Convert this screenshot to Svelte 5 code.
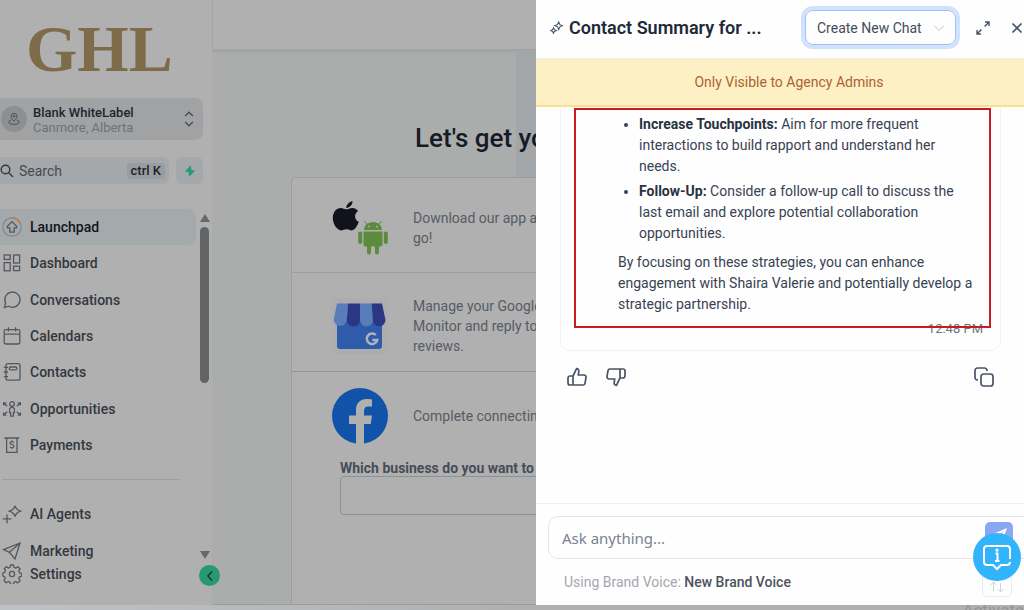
<script>
  const primary = [
    { label: 'Launchpad', icon: 'launch', active: true },
    { label: 'Dashboard', icon: 'dashboard' },
    { label: 'Conversations', icon: 'chat' },
    { label: 'Calendars', icon: 'calendar' },
    { label: 'Contacts', icon: 'contacts' },
    { label: 'Opportunities', icon: 'opps' },
    { label: 'Payments', icon: 'payments' }
  ];
  const secondary = [
    { label: 'AI Agents', icon: 'ai' },
    { label: 'Marketing', icon: 'send' }
  ];
</script>

{#snippet navIcon(name)}
  <svg class="nav-icon" viewBox="0 0 20 20" aria-hidden="true">
    {#if name === 'launch'}
      <circle cx="10" cy="10" r="9.2" stroke="#85888b" />
      <path d="M10 .8a9.2 9.2 0 0 1 8.3 6" stroke="#c07c4e" stroke-width="1.6" />
      <path d="M10 4.6 5.4 9.3v1.5h2.4v4.400h4.400v-4.400h2.400V9.300z" />
    {:else if name === 'dashboard'}
      <rect x="2.200" y="2" width="6" height="4.400" /><rect x="2.200" y="9.600" width="6" height="8.200" />
      <rect x="11.600" y="2" width="6" height="8" /><rect x="11.600" y="13.200" width="6" height="4.400" />
    {:else if name === 'chat'}
      <path d="M2.400 17.600 3.600 13a7.600 7.600 0 1 1 3 3.200z" />
    {:else if name === 'calendar'}
      <rect x="2.200" y="3.600" width="15.600" height="14.400" rx="1.400" /><path d="M2.200 8.200h15.600M6.400 1.200v4.400M13.600 1.200v4.400" />
    {:else if name === 'contacts'}
      <rect x="4" y="1.600" width="14" height="16.600" rx="2" /><rect x="7.400" y="5" width="7.400" height="2.800" rx="1" />
      <path d="M1.800 5.400H6M1.800 10H6M1.800 14.600H6" />
    {:else if name === 'opps'}
      <circle cx="10" cy="5" r="2.300" /><path d="M7.600 9.600q2.400-2.400 4.800 0v4h-1v3.600H8.600v-3.600h-1z" />
      <path d="M1.600 6.600V3.800h2.800M1.800 4l3.400 3.200M18.400 6.600V3.800h-2.800M18.200 4l-3.400 3.200M1.600 13.400v2.800h2.800M1.800 16l3.400-3.200M18.400 13.400v2.800h-2.800M18.200 16l-3.400-3.200" />
    {:else if name === 'payments'}
      <path d="M2.400 3h14.800M4.600 3v14.400H15V3M11.800 7.600q-.6-1-2-1-1.700 0-1.700 1.500 0 1.200 1.800 1.500 2 .3 2 1.700 0 1.500-2 1.500-1.500 0-2-1M9.900 5.400v1.200M9.900 12.800V14" />
    {:else if name === 'ai'}
      <path d="M13 1.800q1 4 5.600 5.400-4.600 1.400-5.600 5.400-1-4-5.600-5.400Q12 5.800 13 1.800zM5 10.400v8.800M.6 14.800h8.800" />
    {:else if name === 'send'}
      <path d="M18 2 1.600 8.600l5.800 2.700L13 18zM18 2 7.400 11.300" />
    {:else if name === 'gear'}
      <circle cx="10" cy="10" r="2.600" />
      <path d="M8.500 1h3l.6 2.400 1.700.7 2.100-1.300 2.200 2.200-1.300 2.100.7 1.700 2.100.5v3l-2.200.5-.7 1.700 1.300 2.200-2.200 2.200-2.100-1.300-1.700.7-.5 2.100h-3l-.6-2.200-1.700-.7-2.100 1.300L2 16.600l1.300-2.100-.7-1.700L.8 12V9l2-.7.700-1.700L2.200 4.700l2.200-2.100 2 1.400 1.600-.7z" stroke-linejoin="round" />
    {/if}
  </svg>
{/snippet}

<div class="page">
  <div class="shell">
    <aside class="sidebar">
      <div class="logo">GHL</div>
      <button class="location">
        <span class="pin">
          <svg viewBox="0 0 16 16" aria-hidden="true"><path d="M8 10.500C5.800 8.300 4.600 6.700 4.600 5a3.400 3.400 0 0 1 6.800 0c0 1.700-1.200 3.300-3.400 5.500zM4.700 9.200C2.700 9.700 2 10.500 2 11.500c0 1.600 2.700 2.600 6 2.600s6-1 6-2.600c0-1-.7-1.800-2.700-2.300" /><circle cx="8" cy="5" r="1" /></svg>
        </span>
        <span class="place"><strong>Blank WhiteLabel</strong><span>Canmore, Alberta</span></span>
        <svg class="updown" viewBox="0 0 10 16" aria-hidden="true"><path d="M1.200 5 5 1.200 8.800 5M1.200 11 5 14.800 8.800 11" /></svg>
      </button>
      <div class="search-row">
        <label class="search">
          <svg viewBox="0 0 14 14" aria-hidden="true"><circle cx="5.500" cy="5.500" r="4.300" /><path d="m8.800 8.800 4.200 4.200" /></svg>
          <input type="search" placeholder="Search" aria-label="Search" />
          <kbd>ctrl K</kbd>
        </label>
        <button class="bolt" aria-label="Quick actions">
          <svg viewBox="0 0 12 12" aria-hidden="true"><path d="M6.600.3.800 6.800h3.700L5.300 11.700l5.900-6.500H7.600z" /></svg>
        </button>
      </div>
      <div class="nav-area">
        <nav>
          {#each primary as item}
            <a href="#nav" class:active={item.active}>{@render navIcon(item.icon)}{item.label}</a>
          {/each}
          <hr />
          {#each secondary as item}
            <a href="#nav">{@render navIcon(item.icon)}{item.label}</a>
          {/each}
        </nav>
        <div class="scrollbar" aria-hidden="true"><i class="up"></i><i class="thumb"></i><i class="down"></i></div>
      </div>
      <a class="settings" href="#nav">{@render navIcon('gear')}Settings</a>
      <button class="collapse" aria-label="Collapse sidebar"><svg viewBox="0 0 10 12" aria-hidden="true"><path d="M7 1.500 3 6l4 4.500" /></svg></button>
    </aside>

    <main>
      <div class="topbar"></div>
      <div class="hero"><h1>Let's get you</h1></div>
      <section class="steps">
        <div class="step first">
          <svg class="art" viewBox="0 0 56 56" aria-hidden="true">
            <g fill="#10131c"><path d="M20.500 1.200c.3 3-2.700 6.600-6.200 6.700C13.900 5 17.200 1.600 20.500 1.200z" /><path d="M14.200 9.300c2-.1 3.700-1.600 6.400-1.400 2.400.2 4.300 1.300 5.400 3-4.300 2.900-3.600 8.800.8 10.900-1 3.300-3.900 8.400-7 8.600-1.800 0-2.900-1.100-5.300-1.100s-3.600 1.100-5.300 1.100C4.700 30.200.6 23.800.8 17.600 1 11.800 4.600 8 8.600 8c2.300 0 3.900 1.300 5.600 1.300z" /></g>
            <g fill="#5d8a3c"><path d="M32 30c0-4.400 3.600-8 9-8s9 3.600 9 8zM31.500 31.500h19v13a2 2 0 0 1-2 2H47v6a2 2 0 0 1-4 0v-6h-4v6a2 2 0 0 1-4 0v-6h-1.500a2 2 0 0 1-2-2z" /><rect x="26.200" y="31.500" width="4" height="12.500" rx="2" /><rect x="51.800" y="31.500" width="4" height="12.500" rx="2" /></g>
            <path d="m34.500 24-2-3M47.500 24l2-3" stroke="#5d8a3c" fill="none" /><circle cx="37" cy="26.500" r=".9" fill="#b0b0b0" /><circle cx="45" cy="26.500" r=".9" fill="#b0b0b0" />
          </svg>
          <p>Download our app and<br />go!</p>
        </div>
        <div class="step second">
          <svg class="art" viewBox="0 0 56 56" aria-hidden="true">
            <rect width="56" height="56" fill="#adadad" />
            <rect x="5" y="17" width="45" height="34" rx="3" fill="#2e5cab" />
            <path d="M5 5.500h11L14.800 22a6.600 6.600 0 0 1-13.100 0z" fill="#587dbb" /><path d="M16 5.500h12V22a6.600 6.600 0 0 1-13.200 0z" fill="#2b3783" />
            <path d="M28 5.500h11.500L41 22a6.500 6.500 0 0 1-13 0z" fill="#587dbb" /><path d="M39.500 5.500H50L53.500 22a6.300 6.300 0 0 1-12.600 0z" fill="#2b3783" />
            <path d="M43.900 37a5.300 5.300 0 1 0 1.400 5h-5" stroke="#b0b4bc" stroke-width="2.400" fill="none" />
          </svg>
          <p>Manage your Google<br />Monitor and reply to<br />reviews.</p>
        </div>
        <div class="step third">
          <svg class="art" viewBox="0 0 56 56" aria-hidden="true"><circle cx="28" cy="28" r="28" fill="#1253aa" /><path d="M24 56V36h-7v-8.500h7V22c0-7 4.200-11 10.500-11 2.500 0 5.500.5 5.500.5v7h-3.500c-3 0-4.500 1.600-4.500 4.200v4.800h8L38.700 36H32v20z" fill="#b0b0b0" /></svg>
          <p>Complete connecting</p>
        </div>
        <label class="business">Which business do you want to<input type="text" /></label>
      </section>
    </main>

    <section class="panel">
      <header>
        <svg class="spark" viewBox="0 0 12 12" aria-hidden="true"><path d="M8 .8 9.100 3.400 11.500 4.300 9.100 5.400 8 8 6.900 5.400 4.400 4.300 6.900 3.400zM3.200 6.200l.8 1.800 1.800.8-1.800.8-.8 1.800-.8-1.800-1.800-.8L2.400 8z" /></svg>
        <h2>Contact Summary for ...</h2>
        <div class="picker">
          <select aria-label="Chat"><option>Create New Chat</option></select>
          <svg viewBox="0 0 12 8" aria-hidden="true"><path d="m1 1.500 5 5 5-5" /></svg>
        </div>
        <button class="plain expand" aria-label="Expand"><svg viewBox="0 0 14 14" aria-hidden="true"><path d="M9 1h4v4M13 1 8.600 5.400M5 13H1V9M1 13l4.400-4.400" /></svg></button>
        <button class="plain close" aria-label="Close"><svg viewBox="0 0 12 12" aria-hidden="true"><path d="m1.500 1.500 9 9M10.500 1.500l-9 9" /></svg></button>
      </header>
      <div class="notice">Only Visible to Agency Admins</div>
      <div class="thread">
        <article>
          <ul>
            <li><b>Engagement</b></li>
            <li><b>Increase Touchpoints:</b> Aim for more frequent<br />interactions to build rapport and understand her<br />needs.</li>
            <li><b>Follow-Up:</b> Consider a follow-up call to discuss the<br />last email and explore potential collaboration<br />opportunities.</li>
          </ul>
          <p>By focusing on these strategies, you can enhance<br />engagement with Shaira Valerie and potentially develop a<br />strategic partnership.</p>
          <time>12:48 PM</time>
          <div class="marker"></div>
        </article>
        <div class="actions">
          <button class="plain" aria-label="Good response"><svg viewBox="0 0 20 20" aria-hidden="true"><path d="M6 18V9l3.600-7.300c1.600 0 2.400 1.100 2.200 2.600L11.300 8H17a2 2 0 0 1 2 2.300l-1 6A2 2 0 0 1 16 18zM6 9H3a2 2 0 0 0-2 2v5a2 2 0 0 0 2 2h3" /></svg></button>
          <button class="plain" aria-label="Bad response"><svg class="flip" viewBox="0 0 20 20" aria-hidden="true"><path d="M6 18V9l3.600-7.300c1.600 0 2.400 1.100 2.200 2.600L11.300 8H17a2 2 0 0 1 2 2.300l-1 6A2 2 0 0 1 16 18zM6 9H3a2 2 0 0 0-2 2v5a2 2 0 0 0 2 2h3" /></svg></button>
          <button class="plain copy" aria-label="Copy"><svg viewBox="0 0 20 20" aria-hidden="true"><rect x="7" y="7" width="12" height="12" rx="2.500" /><path d="M4 13H3.500A2.500 2.500 0 0 1 1 10.500v-7A2.500 2.500 0 0 1 3.500 1h7A2.500 2.500 0 0 1 13 3.500V4" /></svg></button>
        </div>
      </div>
      <footer>
        <div class="ask">
          <input type="text" placeholder="Ask anything..." aria-label="Ask anything" />
        </div>
        <p>Using Brand Voice: <b>New Brand Voice</b></p>
        <button class="send" aria-label="Send"><svg viewBox="0 0 28 28" aria-hidden="true"><path d="M22 6 7 12.500l5 1.500L19 9l-5 6 3 5z" /></svg></button>
        <button class="swap" aria-label="Swap"><svg viewBox="0 0 16 14" aria-hidden="true"><path d="M4.500 11V2M1.500 5l3-3 3 3M11.500 3v9M8.500 9l3 3 3-3" /></svg></button>
        <button class="help" aria-label="Help"><svg viewBox="0 0 32 32" aria-hidden="true"><path d="M29 18V8q0-3-3-3H6Q3 5 3 8v13q0 3 3 3h6l4 4 4-4h6q3 0 3-3" /><path d="M14.500 12.500h2v7.500M14 20h4.500" /><circle cx="16" cy="9.200" r=".6" /></svg></button>
      </footer>
    </section>
  </div>
  <div class="taskbar"><span>Activate</span></div>
</div>

<style>
  :global(body) { margin: 0; }
  .page { min-height: 100vh; display: flex; flex-direction: column; overflow: hidden; background: #b0b0b0; font: 14px/20px Roboto, sans-serif; color: #34383e; }
  .page :global(*) { box-sizing: border-box; }
  button, input, select { font: inherit; color: inherit; border: 0; margin: 0; padding: 0; background: none; outline: 0; }
  svg { display: block; fill: none; stroke: currentColor; flex: none; }
  p, h1, h2, ul { margin: 0; padding: 0; }
  .shell { flex: 1; display: grid; grid-template-columns: 212px minmax(0, 1fr) 488px; }

  .sidebar { position: relative; display: flex; flex-direction: column; background: #b0b0b0; min-width: 0; }
  .logo { height: 98px; padding-left: 26px; font: bold 66px/98px "Liberation Serif", serif; color: #7e6b49; }
  .location { display: flex; align-items: center; gap: 6px; height: 42px; margin-right: 9px; padding: 0 9px 0 1px; background: #a0a2a4; border-radius: 0 8px 8px 0; text-align: left; }
  .pin { display: grid; place-items: center; width: 26px; height: 26px; border-radius: 50%; background: #8e8f90; color: #42464a; }
  .pin svg { width: 14px; height: 14px; }
  .place { flex: 1; display: flex; flex-direction: column; padding-top: 2px; font-size: 13px; line-height: 15px; color: #6e7278; }
  .place strong { font-weight: 500; color: #1e252f; }
  .updown { width: 10px; height: 16px; color: #454c55; stroke-width: 1.300; }
  .search-row { display: flex; gap: 7px; margin: 17px 9px 0 0; height: 27px; }
  .search { flex: 1; min-width: 0; display: flex; align-items: center; gap: 5px; padding-right: 4px; background: #a4a8ab; border-radius: 0 6px 6px 0; }
  .search svg { width: 14px; height: 14px; color: #33383f; stroke-width: 1.400; }
  .search input { flex: 1; min-width: 0; }
  .search input::placeholder { color: #444a51; opacity: 1; }
  kbd { padding: 0 4px; background: #999ca1; border-radius: 3px; font: 500 13px/16px Roboto, sans-serif; color: #1e232a; }
  .bolt { display: grid; place-items: center; width: 27px; background: #a4a8ab; border-radius: 6px; }
  .bolt svg { width: 12px; height: 12px; fill: #259a72; stroke: none; }
  .nav-area { display: flex; align-items: flex-start; margin-top: 25px; height: 353px; }
  nav { flex: 1; display: flex; flex-direction: column; height: 360px; }
  nav a, .settings { display: flex; align-items: center; gap: 8px; padding-left: 2px; font-weight: 500; color: #34383e; text-decoration: none; }
  nav a { flex: 1; margin-right: 1px; }
  nav a.active { background: #a4a9ac; color: #11161e; border-radius: 0 8px 8px 0; }
  .nav-icon { width: 20px; height: 20px; color: #54585d; stroke-width: 1.300; }
  hr { width: 178px; height: 1px; margin: 16px 0 16px 2px; border: 0; background: #9c9ea0; }
  .scrollbar { width: 15px; height: 350px; display: flex; flex-direction: column; align-items: center; padding-top: 5px; }
  .up, .down { border: 5px solid transparent; }
  .up { border-top: 0; border-bottom: 8px solid #65676a; }
  .thumb { width: 9px; height: 156px; margin: 5px 0 auto; border-radius: 5px; background: #636466; }
  .down { border-bottom: 0; border-top: 8px solid #65676a; }
  .settings { height: 24px; }
  .collapse { position: absolute; right: -8px; bottom: 19px; display: grid; place-items: center; width: 21px; height: 21px; border-radius: 50%; background: #26996f; color: #123d30; }
  .collapse svg { width: 10px; height: 12px; stroke-width: 1.500; }

  main { display: flex; flex-direction: column; overflow: hidden; background: #abacac; white-space: nowrap; border-bottom: 1px solid #999c9f; }
  .topbar { height: 50px; background: #b0b0b0; border-left: 1px solid #a3a4a5; border-bottom: 1px solid #a1a3a4; box-shadow: 0 1px 3px #9b9d9f; }
  .hero { height: 127px; padding: 72px 0 0 203px; background: linear-gradient(#a2a6a9, #a2a6a9) right / 20px 100% no-repeat; }
  h1 { font-size: 26px; line-height: 32px; font-weight: 500; color: #141b26; }
  .steps { flex: 1; margin-left: 79px; background: #b0b0b0; border: 1px solid #979ea4; border-width: 1px 0 0 1px; border-top-left-radius: 5px; color: #565c65; }
  .step { display: flex; align-items: center; gap: 25px; padding-left: 40px; }
  .first { height: 95px; padding-top: 5px; border-bottom: 1px solid #979ea4; }
  .second { height: 99px; padding-top: 8px; border-bottom: 1px solid #8f959a; }
  .third { height: 88px; }
  .art { width: 56px; height: 56px; stroke: none; }
  .business { display: block; margin-left: 48px; font-weight: 700; line-height: 16px; color: #464d56; }
  .business input { display: block; width: 400px; height: 39px; border: 1px solid #8d9297; border-radius: 4px; }

  .panel { position: relative; display: flex; flex-direction: column; background: #fefefe; overflow: hidden; min-width: 0; }
  header { display: flex; align-items: center; height: 59px; padding: 0 1px 3px 14px; color: #202939; border-bottom: 1px solid #eceef1; }
  .spark { width: 13px; height: 13px; color: #475467; stroke-width: 1; }
  h2 { flex: 1; margin-left: 6px; font-size: 18px; line-height: 24px; font-weight: 600; white-space: nowrap; }
  .picker { position: relative; width: 151px; height: 35px; margin-right: 20px; border: 1px solid #9dc1f8; border-radius: 8px; box-shadow: 0 0 0 4px #d1e2fc; color: #444c58; }
  .picker select { width: 100%; height: 33px; padding-left: 11px; appearance: none; }
  .picker svg { position: absolute; right: 10px; top: 13px; width: 12px; height: 8px; color: #c0c5cd; pointer-events: none; }
  .plain { display: grid; place-items: center; color: #475467; }
  .expand svg { width: 14px; height: 14px; stroke-width: 1.400; }
  .close { margin-left: 21px; }
  .close svg { width: 12px; height: 12px; stroke-width: 1.700; }
  .notice { height: 48px; line-height: 46px; padding-left: 18px; text-align: center; background: #fdf0c4; border-bottom: 2px solid #fbdf8b; color: #ad6331; }
  .thread { flex: 1; overflow: hidden; padding: 0 23px 0 24px; }
  article { position: relative; margin-top: -20px; height: 264px; padding: 1px 0 0 57px; border: 1px solid #f0f1f3; border-radius: 0 0 10px 10px; line-height: 21px; color: #384252; white-space: nowrap; }
  ul { padding-left: 21px; }
  li { margin-bottom: 4px; }
  article b { font-weight: 700; color: #283241; }
  article p { padding-top: 4px; }
  time { display: block; padding: 3px 17px 0 0; text-align: right; font-size: 13px; color: #6d7580; }
  .marker { position: absolute; inset: 20px 9px 22px 13px; border: 2px solid #c81b20; }
  .actions { display: flex; gap: 19px; padding: 16px 7px 0; }
  .actions svg { width: 20px; height: 20px; stroke-width: 1.700; }
  .flip { transform: rotate(180deg); }
  .copy { margin-left: auto; }
  footer { position: relative; height: 102px; padding: 12px 0 0 12px; border-top: 1px solid #eceef1; }
  .ask { height: 43px; margin-right: -14px; border: 1px solid #e4e6ea; border-radius: 10px; }
  .ask input { width: 100%; height: 41px; padding-left: 13px; font: 15px "Noto Sans", sans-serif; }
  .ask input::placeholder { color: #78828f; opacity: 1; }
  footer p { padding: 13px 0 0 16px; color: #a3a7ae; }
  footer b { font-weight: 500; color: #4c535e; }
  .send { position: absolute; right: 11px; top: 18px; width: 28px; height: 28px; background: #8aa8f2; border-radius: 5px; }
  .send svg { fill: #fff; stroke: none; }
  .swap { position: absolute; right: 12px; top: 68px; display: grid; place-items: end center; width: 30px; height: 25px; padding-bottom: 2px; border: 1px solid #e4edf3; border-radius: 5px; color: #cfd4d9; }
  .swap svg { width: 16px; height: 14px; }
  .help { position: absolute; right: 3px; top: 29px; display: grid; place-items: center; width: 48px; height: 48px; border-radius: 50%; background: #32b4fd; color: #fff; }
  .help svg { width: 32px; height: 32px; stroke-width: 2; }
  .taskbar { height: 5px; overflow: hidden; background: linear-gradient(90deg, #bdc2c8, #b0b0b0 50%); text-align: right; color: #969696; }
  .taskbar span { display: block; font-size: 17px; line-height: 10px; }
</style>
